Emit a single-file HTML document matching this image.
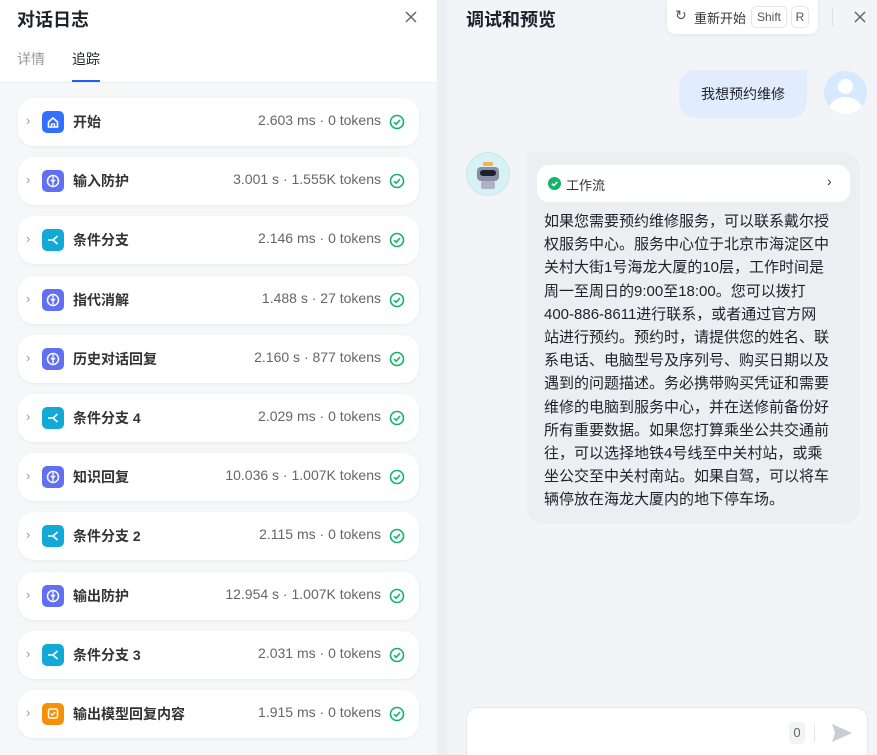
<!DOCTYPE html>
<html><head><meta charset="utf-8"><style>
*{margin:0;padding:0;box-sizing:border-box}
html,body{width:877px;height:755px;overflow:hidden}
body{font-family:"Liberation Sans","Noto Sans CJK SC",sans-serif;background:#f3f4f8;position:relative;color:#1d2129}
#left{position:absolute;left:0;top:0;width:437px;height:755px;background:#f6f7f9}
#lh{position:absolute;left:0;top:0;width:437px;height:83px;background:#fff;border-bottom:1px solid #eceef2}
#div{position:absolute;left:437px;top:0;width:10px;height:755px;background:#eceef3}
.t{position:absolute;font-size:18px;font-weight:bold;color:#1d2129}
.card{position:absolute;left:18px;width:401px;height:48px;background:#fff;border-radius:16px;box-shadow:0 1px 3px rgba(0,0,0,.06)}
.card .ar{position:absolute;left:8px;top:15px;font-size:13px;color:#999}
.card .ic{position:absolute;left:24px;top:13px;width:22px;height:22px;border-radius:5px}
.card .nm{position:absolute;left:55px;top:14px;font-size:14px;font-weight:bold;color:#333}
.card .mt{position:absolute;right:38px;top:14px;font-size:14px;color:#666}
.card svg.ck{position:absolute;right:14px;top:16px}
.ic svg{position:absolute;left:3px;top:3px}
</style></head><body>
<div id="left">
<div id="lh">
<div class="t" style="left:17px;top:6px">对话日志</div>
<svg style="position:absolute;left:405px;top:11px" width="12" height="12"><path d="M1 1L11 11M11 1L1 11" stroke="#666" stroke-width="1.5"/></svg>
<div style="position:absolute;left:17px;top:49px;font-size:14px;color:#999">详情</div>
<div style="position:absolute;left:72px;top:49px;font-size:14px;color:#1d2129">追踪</div>
<div style="position:absolute;left:72px;top:80px;width:28px;height:2px;background:#1d5ff5"></div>
</div>
</div>
<div id="div"></div>
<div id="cards"></div>
<script>
var d=[["开始","2.603 ms · 0 tokens","#3370ff","h"],["输入防护","3.001 s · 1.555K tokens","#6170f0","b"],["条件分支","2.146 ms · 0 tokens","#12a9d6","s"],["指代消解","1.488 s · 27 tokens","#6170f0","b"],["历史对话回复","2.160 s · 877 tokens","#6170f0","b"],["条件分支 4","2.029 ms · 0 tokens","#12a9d6","s"],["知识回复","10.036 s · 1.007K tokens","#6170f0","b"],["条件分支 2","2.115 ms · 0 tokens","#12a9d6","s"],["输出防护","12.954 s · 1.007K tokens","#6170f0","b"],["条件分支 3","2.031 ms · 0 tokens","#12a9d6","s"],["输出模型回复内容","1.915 ms · 0 tokens","#f79009","o"]];
var ic={h:'<path d="M3.5 8L8 4L12.5 8V13H3.5Z" fill="none" stroke="#fff" stroke-width="1.6"/><path d="M6.5 13V10H9.5V13" stroke="#fff" fill="none" stroke-width="1.3"/>',b:'<circle cx="8" cy="8" r="5.5" fill="none" stroke="#fff" stroke-width="1.5"/><path d="M8 3.5V12.5M5.8 6.8L8 9L10.2 6.8" stroke="#fff" fill="none" stroke-width="1.3"/>',s:'<path d="M3 8H8M8 8L12.5 4M8 8L12.5 12" stroke="#fff" fill="none" stroke-width="1.6"/>',o:'<rect x="3.5" y="3" width="9" height="9" rx="1.5" fill="none" stroke="#fff" stroke-width="1.5"/><path d="M5.8 7.5L7.4 9L10.2 6" stroke="#fff" fill="none" stroke-width="1.3"/>'};
var h="";d.forEach(function(x,i){var t=98+i*59.2;h+='<div class="card" style="top:'+t+'px"><span class="ar">›</span><div class="ic" style="background:'+x[2]+'"><svg width="16" height="16">'+ic[x[3]]+'</svg></div><span class="nm">'+x[0]+'</span><span class="mt">'+x[1]+'</span><svg class="ck" width="16" height="16"><circle cx="8" cy="8" r="6.5" fill="none" stroke="#17b26a" stroke-width="1.6"/><path d="M5 8.2L7.2 10.2L11 6" fill="none" stroke="#17b26a" stroke-width="1.6"/></svg></div>'});
document.getElementById("cards").innerHTML=h;
</script>
<div class="t" style="left:466px;top:6px">调试和预览</div>
<div style="position:absolute;left:667px;top:0;width:151px;height:34px;background:#fff;border-radius:0 0 8px 8px;box-shadow:0 1px 4px rgba(0,0,0,.08)"></div>
<div style="position:absolute;left:675px;top:7px;font-size:14px;color:#555">↻</div>
<div style="position:absolute;left:694px;top:8px;font-size:13px;color:#333">重新开始</div>
<div style="position:absolute;left:751px;top:6px;width:36px;height:22px;border:1px solid #e5e6eb;border-radius:5px;font-size:12px;color:#555;text-align:center;line-height:20px">Shift</div>
<div style="position:absolute;left:791px;top:6px;width:18px;height:22px;border:1px solid #e5e6eb;border-radius:5px;font-size:12px;color:#555;text-align:center;line-height:20px">R</div>
<div style="position:absolute;left:832px;top:8px;width:1px;height:18px;background:#e0e0e0"></div>
<svg style="position:absolute;left:854px;top:11px" width="12" height="12"><path d="M1 1L11 11M11 1L1 11" stroke="#666" stroke-width="1.5"/></svg>
<div style="position:absolute;left:679px;top:70px;width:128px;height:48px;background:#e1edfd;border-radius:16px 0 16px 16px;font-size:14px;line-height:48px;text-align:center;color:#1d2129">我想预约维修</div>
<div style="position:absolute;left:824px;top:71px;width:43px;height:43px;border-radius:50%;background:#d5eaff;overflow:hidden"><div style="position:absolute;left:14px;top:8px;width:15px;height:15px;border-radius:50%;background:#fff"></div><div style="position:absolute;left:4px;top:26px;width:35px;height:30px;border-radius:50%;background:#fff"></div></div>
<div style="position:absolute;left:466px;top:152px;width:44px;height:44px;border-radius:50%;background:#d6f2f4;border:1px solid #c8e9ec"><div style="position:absolute;left:10px;top:14px;width:22px;height:14px;background:#8c8ea5;border-radius:4px"></div><div style="position:absolute;left:13px;top:17px;width:16px;height:6px;background:#1a2030;border-radius:3px"></div><div style="position:absolute;left:16px;top:9px;width:10px;height:4px;background:#f5b347;border-radius:2px"></div><div style="position:absolute;left:14px;top:28px;width:14px;height:8px;background:#b0b2c4;border-radius:2px"></div></div>
<div style="position:absolute;left:527px;top:152px;width:333px;height:372px;background:#eceef2;border-radius:0 16px 16px 16px"></div>
<div style="position:absolute;left:537px;top:165px;width:313px;height:37px;background:#fff;border-radius:12px"></div>
<svg style="position:absolute;left:548px;top:177px" width="13" height="13"><circle cx="6.5" cy="6.5" r="6.5" fill="#17b26a"/><path d="M3.8 6.7L5.8 8.6L9.3 4.9" stroke="#fff" fill="none" stroke-width="1.5"/></svg>
<div style="position:absolute;left:566px;top:175px;font-size:13px;color:#333">工作流</div>
<div style="position:absolute;left:827px;top:173px;font-size:14px;color:#333">›</div>
<div style="position:absolute;left:544px;top:210px;width:310px;font-size:15px;line-height:23.2px;color:#1d2129;white-space:nowrap">如果您需要预约维修服务，可以联系戴尔授<br>权服务中心。服务中心位于北京市海淀区中<br>关村大街1号海龙大厦的10层，工作时间是<br>周一至周日的9:00至18:00。您可以拨打<br>400-886-8611进行联系，或者通过官方网<br>站进行预约。预约时，请提供您的姓名、联<br>系电话、电脑型号及序列号、购买日期以及<br>遇到的问题描述。务必携带购买凭证和需要<br>维修的电脑到服务中心，并在送修前备份好<br>所有重要数据。如果您打算乘坐公共交通前<br>往，可以选择地铁4号线至中关村站，或乘<br>坐公交至中关村南站。如果自驾，可以将车<br>辆停放在海龙大厦内的地下停车场。</div>
<div style="position:absolute;left:466px;top:707px;width:402px;height:60px;background:#fff;border:1px solid #e5e6eb;border-radius:12px"></div>
<div style="position:absolute;left:789px;top:722px;width:16px;height:22px;background:#f2f3f5;border-radius:4px;font-size:13px;color:#666;text-align:center;line-height:22px">0</div>
<div style="position:absolute;left:814px;top:724px;width:1px;height:18px;background:#e5e6eb"></div>
<svg style="position:absolute;left:831px;top:723px" width="22" height="20"><path d="M1 1L21 10L1 19L4 10Z" fill="#c9cdd4"/></svg>
</body></html>
